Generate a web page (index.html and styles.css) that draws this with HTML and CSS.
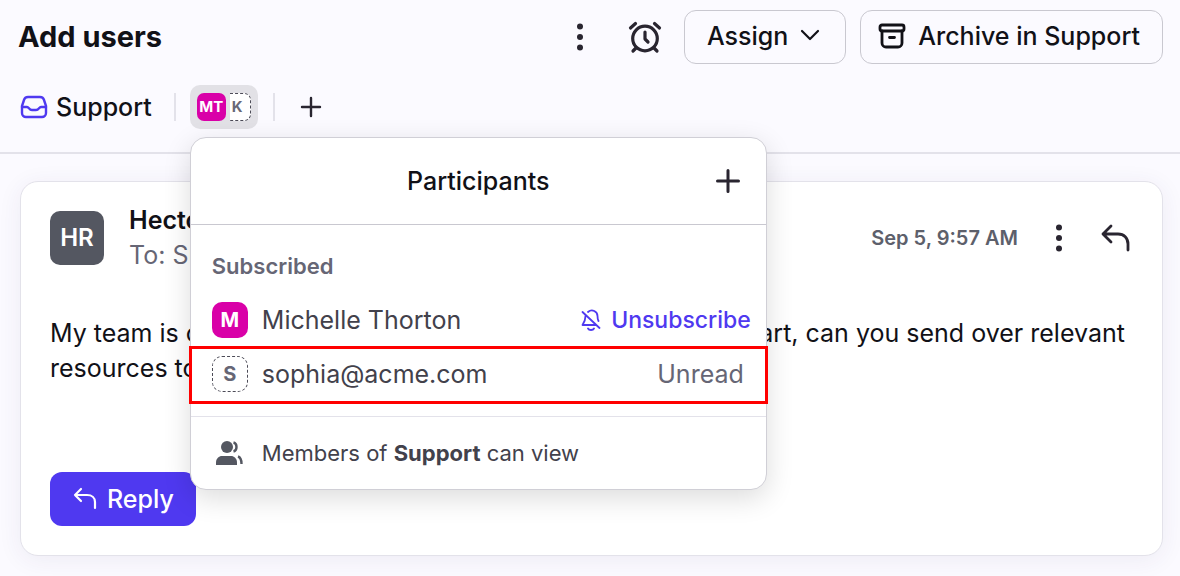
FILE: index.html
```
<!DOCTYPE html>
<html lang="en">
<head>
  <meta charset="UTF-8" />
  <meta name="viewport" content="width=device-width, initial-scale=1.0"/>
  <title>Add users</title>
  <link rel="stylesheet" href="styles.css">
</head>
<body>
  <header class="header">
    <div class="title-row">
      <h1>Add users</h1>
      <div class="actions">
        <button class="icon-btn" aria-label="More">
          <svg width="30" height="30" viewBox="0 0 30 30" fill="currentColor"><circle cx="15" cy="4.5" r="3"/><circle cx="15" cy="15" r="3"/><circle cx="15" cy="25.5" r="3"/></svg>
        </button>
        <button class="icon-btn snooze" aria-label="Snooze">
          <svg width="34" height="34" viewBox="0 0 34 34" fill="none" stroke="currentColor" stroke-width="3.2" stroke-linecap="round" stroke-linejoin="round"><circle cx="17" cy="18.5" r="12.3"/><path d="M17 12v7l3 3M2.500 8l5-4.500M31.500 8l-5-4.500M8 28l-3 3M26 28l3 3"/></svg>
        </button>
        <button class="btn">
          Assign
          <svg class="chevron" width="20" height="20" viewBox="0 0 20 20" fill="none" stroke="currentColor" stroke-width="2.2" stroke-linecap="round" stroke-linejoin="round"><path d="M2 5l8 8 8-8"/></svg>
        </button>
        <button class="btn archive">
          <svg width="28" height="28" viewBox="0 0 28 28" fill="none" stroke="currentColor" stroke-width="2.8" stroke-linecap="round" stroke-linejoin="round"><rect x="2" y="3" width="24" height="6" rx="2"/><path d="M4 9v12a4 4 0 0 0 4 4h12a4 4 0 0 0 4-4V9M11.500 15.500h5"/></svg>
          Archive in Support
        </button>
      </div>
    </div>

    <div class="meta-row">
      <a class="inbox" href="#">
        <svg width="28" height="28" viewBox="0 0 28 28" fill="none" stroke="currentColor" stroke-width="2.4" stroke-linecap="round" stroke-linejoin="round"><path d="M8 4h12c2 0 3.500 1 4 3l2 6v7a4 4 0 0 1-4 4H6a4 4 0 0 1-4-4v-7l2-6c.5-2 2-3 4-3z"/><path d="M2 14h5c2 0 2 3 5 3h4c3 0 3-3 5-3h5"/></svg>
        Support
      </a>
      <span class="divider"></span>
      <div class="people">
        <button class="people-btn" aria-label="Participants">
          <span class="chip chip-mt">MT</span>
          <span class="chip chip-k">K</span>
        </button>

        <section class="popover">
          <div class="popover-head">
            <h2>Participants</h2>
            <button class="add-btn" aria-label="Add participant">
              <svg width="26" height="26" viewBox="0 0 26 26" fill="none" stroke="currentColor" stroke-width="3" stroke-linecap="round"><path d="M13 2.500v21M2.500 13h21"/></svg>
            </button>
          </div>
          <h3>Subscribed</h3>
          <div class="person">
            <span class="avatar avatar-m">M</span>
            <span class="name">Michelle Thorton</span>
            <button class="unsubscribe">
              <svg width="20" height="22" viewBox="0 0 20 22" fill="none" stroke="currentColor" stroke-width="1.8" stroke-linecap="round" stroke-linejoin="round"><path d="M1.500 3l17 16M4.500 7c0 4-1 6-3 9h13M7 3c4-3.500 9.500-.5 9.500 4 0 2 0 3 1 5M7 19.500c1 2 5 2 6 0"/></svg>
              Unsubscribe
            </button>
          </div>
          <div class="person highlight">
            <span class="avatar avatar-s">S</span>
            <span class="name">sophia@acme.com</span>
            <span class="state">Unread</span>
          </div>
          <div class="popover-foot">
            <svg width="28" height="26" viewBox="0 0 28 26" fill="currentColor"><circle cx="11" cy="7" r="6"/><path d="M0 25v-2.500c0-4 3-6.500 6-6.500h9c3 0 6 2.500 6 6.500V25z"/><path d="M17.500 2.500c4 1 4 8 0 9M22 16.500c3 1 3.500 4 3.500 7.500" fill="none" stroke="currentColor" stroke-width="2.4"/></svg>
            <p>Members of <strong>Support</strong> can view</p>
          </div>
        </section>
      </div>
      <span class="divider"></span>
      <button class="icon-btn plus" aria-label="Add">
        <svg width="22" height="22" viewBox="0 0 22 22" fill="none" stroke="currentColor" stroke-width="2.4" stroke-linecap="round"><path d="M11 2v18M2 11h18"/></svg>
      </button>
    </div>
  </header>

  <main>
    <article class="message">
      <div class="message-head">
        <span class="sender-avatar">HR</span>
        <div class="sender">
          <strong>Hector Ruiz</strong>
          <span>To: Support</span>
        </div>
        <time>Sep 5, 9:57 AM</time>
        <button class="icon-btn" aria-label="More">
          <svg width="30" height="30" viewBox="0 0 30 30" fill="currentColor"><circle cx="15" cy="4.5" r="3"/><circle cx="15" cy="15" r="3"/><circle cx="15" cy="25.5" r="3"/></svg>
        </button>
        <button class="icon-btn reply-icon" aria-label="Reply">
          <svg width="30" height="30" viewBox="0 0 30 30" fill="none" stroke="currentColor" stroke-width="2.8" stroke-linecap="round" stroke-linejoin="round"><path d="M11 3l-8 8 8 8M3 11h15c6 0 10 4 10 10v6"/></svg>
        </button>
      </div>
      <p class="text">My team is onboarding three new employees. Before they start, can you send over relevant resources to them?</p>
      <button class="reply">
        <svg width="24" height="24" viewBox="0 0 24 24" fill="none" stroke="currentColor" stroke-width="2.2" stroke-linecap="round" stroke-linejoin="round"><path d="M8 2L2 8l6 6M2 8h12c5 0 8 3 8 7v6"/></svg>
        Reply
      </button>
    </article>
  </main>
</body>
</html>
```
FILE: styles.css
```
* {
  box-sizing: border-box;
}
body {
  margin: 0;
  font-family: Inter, "Liberation Sans", sans-serif;
  font-size: 25px;
  line-height: 32px;
  background: #fbfaff;
  color: #111117;
}
h1, h2, h3, p {
  margin: 0;
}
button {
  font: inherit;
  color: inherit;
  background: none;
  border: none;
  padding: 0;
  cursor: pointer;
}
svg {
  display: block;
  flex-shrink: 0;
}
.header {
  padding: 10px 17px 23px 18px;
  border-bottom: 2px solid #e3e2ea;
}
.title-row {
  display: flex;
  justify-content: space-between;
  align-items: center;
}
h1 {
  font-size: 29px;
  font-weight: 700;
}
.actions {
  display: flex;
  align-items: center;
}
.icon-btn {
  color: #292530;
}
.snooze {
  margin: 0 22px 0 33px;
}
.btn {
  display: flex;
  align-items: center;
  gap: 12px;
  height: 54px;
  padding: 0 25px 2px 22px;
  border: 1px solid #c9c8d0;
  border-radius: 12px;
  font-weight: 500;
}
.archive {
  margin-left: 14px;
  padding: 0 22px 2px 17px;
}
.meta-row {
  display: flex;
  align-items: center;
  height: 44px;
  margin-top: 21px;
}
.inbox {
  display: flex;
  align-items: center;
  gap: 8px;
  padding-left: 2px;
  color: #111117;
  font-weight: 500;
  text-decoration: none;
}
.inbox svg {
  color: #4f39f0;
}
.divider {
  width: 2px;
  height: 28px;
  margin: 0 14px 0 22px;
  background: #e3e2ea;
}
.people {
  position: relative;
}
.people + .divider {
  margin: 0 25px 0 15px;
}
.people-btn {
  display: flex;
  align-items: center;
  height: 44px;
  padding: 0 7px;
  border-radius: 10px;
  background: #e2e1e6;
}
.chip {
  height: 28px;
  font-size: 15px;
  font-weight: 700;
  line-height: 28px;
}
.chip-mt {
  width: 29px;
  border-radius: 7px;
  background: #d900a8;
  color: #fff;
}
.chip-k {
  width: 21px;
  margin-left: 4px;
  padding-left: 2px;
  border: 1px dashed #4c4b57;
  border-left: none;
  border-radius: 0 7px 7px 0;
  background: #fff;
  color: #686877;
  line-height: 26px;
  text-align: left;
}
.popover {
  position: absolute;
  top: 52px;
  left: 0;
  width: 577px;
  border: 1px solid #d0cfd6;
  border-radius: 16px;
  background: #fff;
  box-shadow: 0 8px 28px rgba(0, 0, 0, 0.14);
  color: #42414b;
}
.popover-head {
  display: grid;
  grid-template-columns: 1fr auto 1fr;
  align-items: center;
  height: 87px;
  padding: 0 25px;
  border-bottom: 1px solid #c9c8d0;
  color: #111117;
}
h2 {
  grid-column: 2;
  font-size: 25px;
  font-weight: 500;
}
.add-btn {
  justify-self: end;
  color: #292530;
}
h3 {
  padding: 25px 21px 11px;
  font-size: 22px;
  font-weight: 600;
  color: #666675;
}
.person {
  display: flex;
  align-items: center;
  height: 54px;
  padding: 0 15px 0 21px;
}
.avatar {
  width: 36px;
  height: 36px;
  border-radius: 10px;
  font-size: 20px;
  font-weight: 700;
  line-height: 36px;
  text-align: center;
}
.avatar-m {
  background: #d900a8;
  color: #fff;
}
.avatar-s {
  border: 1px dashed #4c4b57;
  color: #666675;
  line-height: 34px;
}
.name {
  flex: 1;
  margin-left: 14px;
}
.unsubscribe {
  display: flex;
  align-items: center;
  gap: 10px;
  color: #4f39f0;
  font-size: 23px;
  font-weight: 500;
}
.highlight {
  height: 58px;
  margin: -1px -2px 12px;
  padding: 0 21px 2px 20px;
  border: 3px solid #ff0000;
}
.state {
  color: #666675;
}
.popover-foot {
  display: flex;
  align-items: center;
  gap: 18px;
  height: 73px;
  padding: 0 25px;
  border-top: 1px solid #e3e2ea;
  font-size: 22px;
}
.popover-foot svg {
  color: #545761;
}
main {
  padding: 27px 17px 20px 20px;
}
.message {
  padding: 21px 29px 29px;
  border: 1px solid #e3e2ea;
  border-radius: 18px;
  background: #fff;
  box-shadow: 0 4px 24px rgba(60, 40, 100, 0.07);
}
.message-head {
  display: flex;
  align-items: center;
}
.sender-avatar {
  width: 54px;
  height: 54px;
  border-radius: 10px;
  background: #545761;
  color: #fff;
  font-size: 24px;
  font-weight: 600;
  line-height: 54px;
  text-align: center;
}
.sender {
  flex: 1;
  margin-left: 25px;
}
.sender strong, .sender span {
  display: block;
  line-height: 35px;
}
.sender strong {
  font-weight: 600;
}
.sender span {
  color: #666675;
}
time {
  margin-right: 26px;
  color: #5d606b;
  font-size: 20px;
  font-weight: 600;
}
.reply-icon {
  margin: 0 3px 0 26px;
}
.text {
  margin-top: 43px;
  line-height: 35px;
}
.reply {
  display: flex;
  align-items: center;
  gap: 10px;
  height: 54px;
  margin-top: 86px;
  padding: 0 22px 0 23px;
  border-radius: 12px;
  background: #4f39f0;
  color: #fff;
  font-weight: 500;
}
```
